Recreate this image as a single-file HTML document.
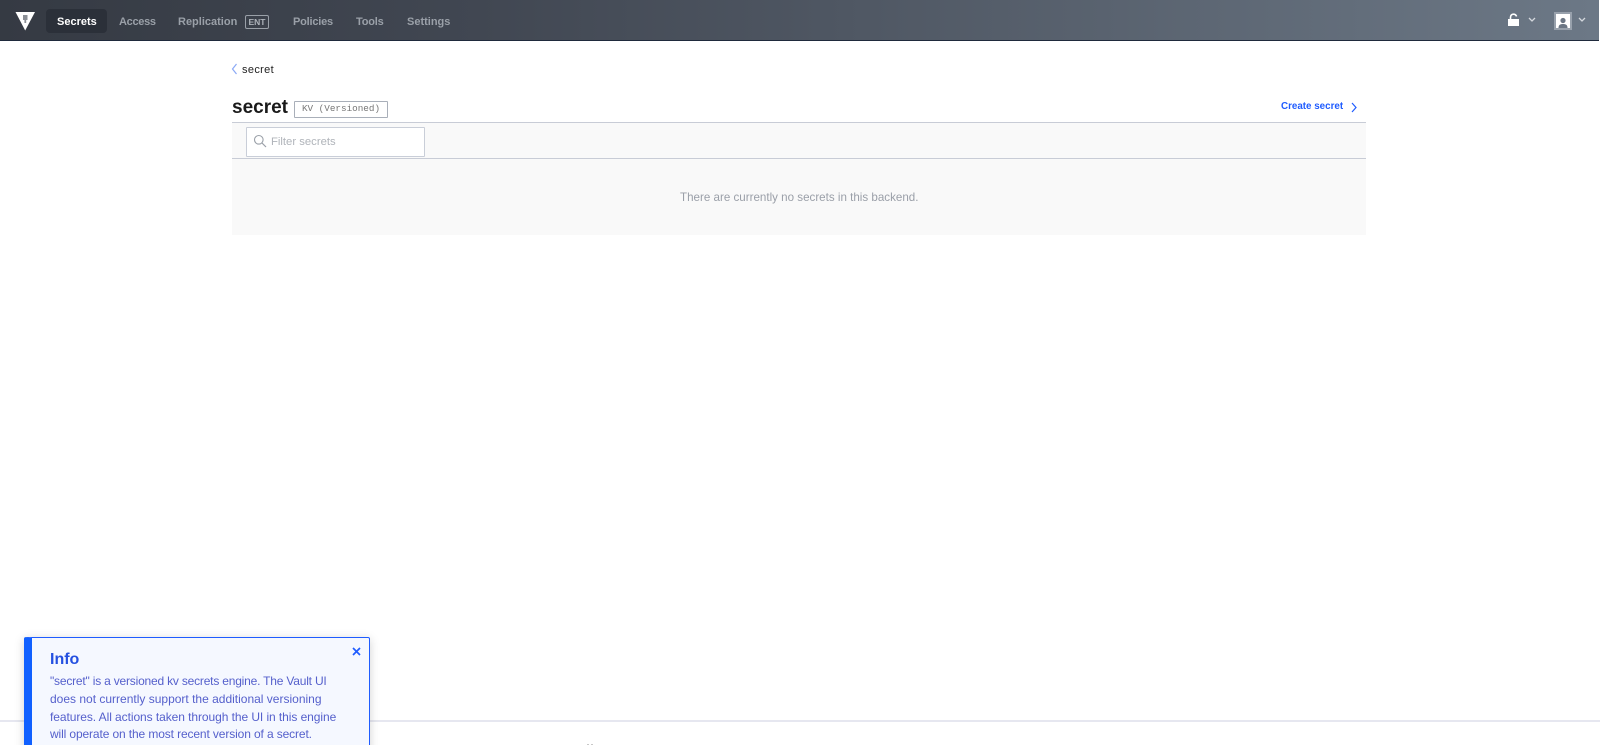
<!DOCTYPE html>
<html><head><meta charset="utf-8"><title>Vault</title>
<style>
html,body{margin:0;padding:0;width:1600px;height:745px;overflow:hidden;background:#fff;font-family:"Liberation Sans",sans-serif}
body{position:relative}
.a{position:absolute;white-space:nowrap}
#nav{position:absolute;left:0;top:0;width:1599px;height:40px;background:linear-gradient(90deg,#353a43 0%,#414752 30%,#6c7886 100%);border-bottom:1px solid #1f2a3c}
.n{position:absolute;top:14px;font-size:11px;line-height:16px;font-weight:700;color:#9aa0a8;white-space:nowrap}
.t{position:absolute;left:50px;font-size:12px;line-height:18px;color:#5560cc;white-space:nowrap}
</style></head><body>
<div id="nav">
<svg class="a" style="left:15px;top:11px" width="21" height="20" viewBox="0 0 21 20"><path d="M0.5 1H20L10.2 19.5Z" fill="#fff"/><rect x="8" y="4" width="4.5" height="5" fill="#8b8f96"/><rect x="9.4" y="9" width="1.8" height="3" fill="#8b8f96"/></svg>
<div class="a" style="left:46px;top:9px;width:61px;height:24px;background:#2b3039;border-radius:4px"></div>
<div class="n" style="left:57px;color:#fff">Secrets</div>
<div class="n" style="left:119px;letter-spacing:-.3px">Access</div>
<div class="n" style="left:178px">Replication</div>
<div class="a" style="left:245px;top:15px;width:22px;height:12px;border:1px solid #9aa0a8;border-radius:2px;font-size:8.5px;line-height:12px;text-align:center;color:#aeb3ba;font-weight:700">ENT</div>
<div class="n" style="left:293px;letter-spacing:-.2px">Policies</div>
<div class="n" style="left:356px;letter-spacing:-.2px">Tools</div>
<div class="n" style="left:407px">Settings</div>
<svg class="a" style="left:1507px;top:13px" width="14" height="14" viewBox="0 0 14 14"><path d="M3.5 6V4.2C3.5 2.3 4.9 1.2 6.4 1.2C8 1.2 9 2 9.6 3.4" fill="none" stroke="#fff" stroke-width="1.6"/><rect x="1" y="6" width="11" height="7" fill="#fff"/></svg>
<svg class="a" style="left:1528px;top:17px" width="8" height="6" viewBox="0 0 8 6"><path d="M1 1L4 4L7 1" fill="none" stroke="#d5d9de" stroke-width="1.3"/></svg>
<div class="a" style="left:1554px;top:12px;width:18px;height:18px;background:#98a1ac"></div>
<svg class="a" style="left:1556px;top:14px" width="14" height="14" viewBox="0 0 14 14"><rect width="14" height="14" fill="#fff"/><circle cx="7" cy="6.5" r="2.6" fill="#6b7684"/><path d="M2.5 14C2.5 11 4 10 7 10S11.5 11 11.5 14Z" fill="#6b7684"/></svg>
<svg class="a" style="left:1578px;top:17px" width="8" height="6" viewBox="0 0 8 6"><path d="M1 1L4 4L7 1" fill="none" stroke="#d5d9de" stroke-width="1.3"/></svg>
</div>

<svg class="a" style="left:231px;top:63px" width="7" height="12" viewBox="0 0 7 12"><path d="M5.5 1L1.5 6L5.5 11" fill="none" stroke="#8aa8f5" stroke-width="1.2"/></svg>
<div class="a" style="left:242px;top:62px;font-size:11px;line-height:16px;color:#222;letter-spacing:.35px">secret</div>

<div class="a" style="left:232px;top:96px;font-size:19px;line-height:24px;font-weight:700;color:#1a1a1a">secret</div>
<div class="a" style="left:294px;top:101px;width:92px;height:15px;border:1px solid #a9afb9;border-radius:1px;font-family:'Liberation Mono',monospace;font-size:9.3px;line-height:14px;text-align:center;color:#777">KV (Versioned)</div>
<div class="a" style="left:1281px;top:99px;font-size:9.8px;line-height:16px;font-weight:700;color:#1f5cff">Create secret</div>
<svg class="a" style="left:1350px;top:102px" width="8" height="11" viewBox="0 0 8 11"><path d="M2 1L6 5.5L2 10" fill="none" stroke="#1f5cff" stroke-width="1.2"/></svg>

<div class="a" style="left:232px;top:122px;width:1134px;height:113px;background:#f9f9f9"></div>
<div class="a" style="left:232px;top:122px;width:1134px;height:1px;background:#c8ccd6"></div>
<div class="a" style="left:232px;top:158px;width:1134px;height:1px;background:#c8ccd6"></div>
<div class="a" style="left:246px;top:127px;width:177px;height:28px;background:#fff;border:1px solid #c9ced8;border-radius:1px"></div>
<svg class="a" style="left:253px;top:134px" width="14" height="14" viewBox="0 0 14 14"><circle cx="5.8" cy="5.8" r="4.3" fill="none" stroke="#9aa0a8" stroke-width="1.1"/><path d="M9 9L13 13" stroke="#9aa0a8" stroke-width="1.2"/></svg>
<div class="a" style="left:271px;top:134px;font-size:11.3px;line-height:16px;color:#b0b4ba">Filter secrets</div>
<div class="a" style="left:680px;top:190px;font-size:11.6px;line-height:16px;color:#9a9fa8">There are currently no secrets in this backend.</div>

<div class="a" style="left:0;top:720px;width:1600px;height:2px;background:#e6e7f0"></div>
<div class="a" style="left:587px;top:744px;width:2px;height:1px;background:#c8c8c8"></div>
<div class="a" style="left:591px;top:744px;width:2px;height:1px;background:#c8c8c8"></div>

<div class="a" style="left:24px;top:637px;width:346px;height:140px;background:#f5f8ff;border:1px solid #1f5cff;border-radius:2px;box-shadow:0 2px 10px rgba(0,0,0,.18);box-sizing:border-box;border-left:8px solid #1060ff"></div>
<div class="a" style="left:50px;top:650px;font-size:16px;line-height:20px;font-weight:700;color:#2450e0">Info</div>
<svg class="a" style="left:352px;top:647px" width="9" height="9" viewBox="0 0 9 9"><path d="M1 1L8 8M8 1L1 8" stroke="#1f5cff" stroke-width="1.7"/></svg>
<div class="t" style="top:672px;letter-spacing:-.2px">"secret" is a versioned kv secrets engine. The Vault UI</div>
<div class="t" style="top:690px">does not currently support the additional versioning</div>
<div class="t" style="top:708px;letter-spacing:-.07px">features. All actions taken through the UI in this engine</div>
<div class="t" style="top:725px;letter-spacing:-.12px">will operate on the most recent version of a secret.</div>
</body></html>
